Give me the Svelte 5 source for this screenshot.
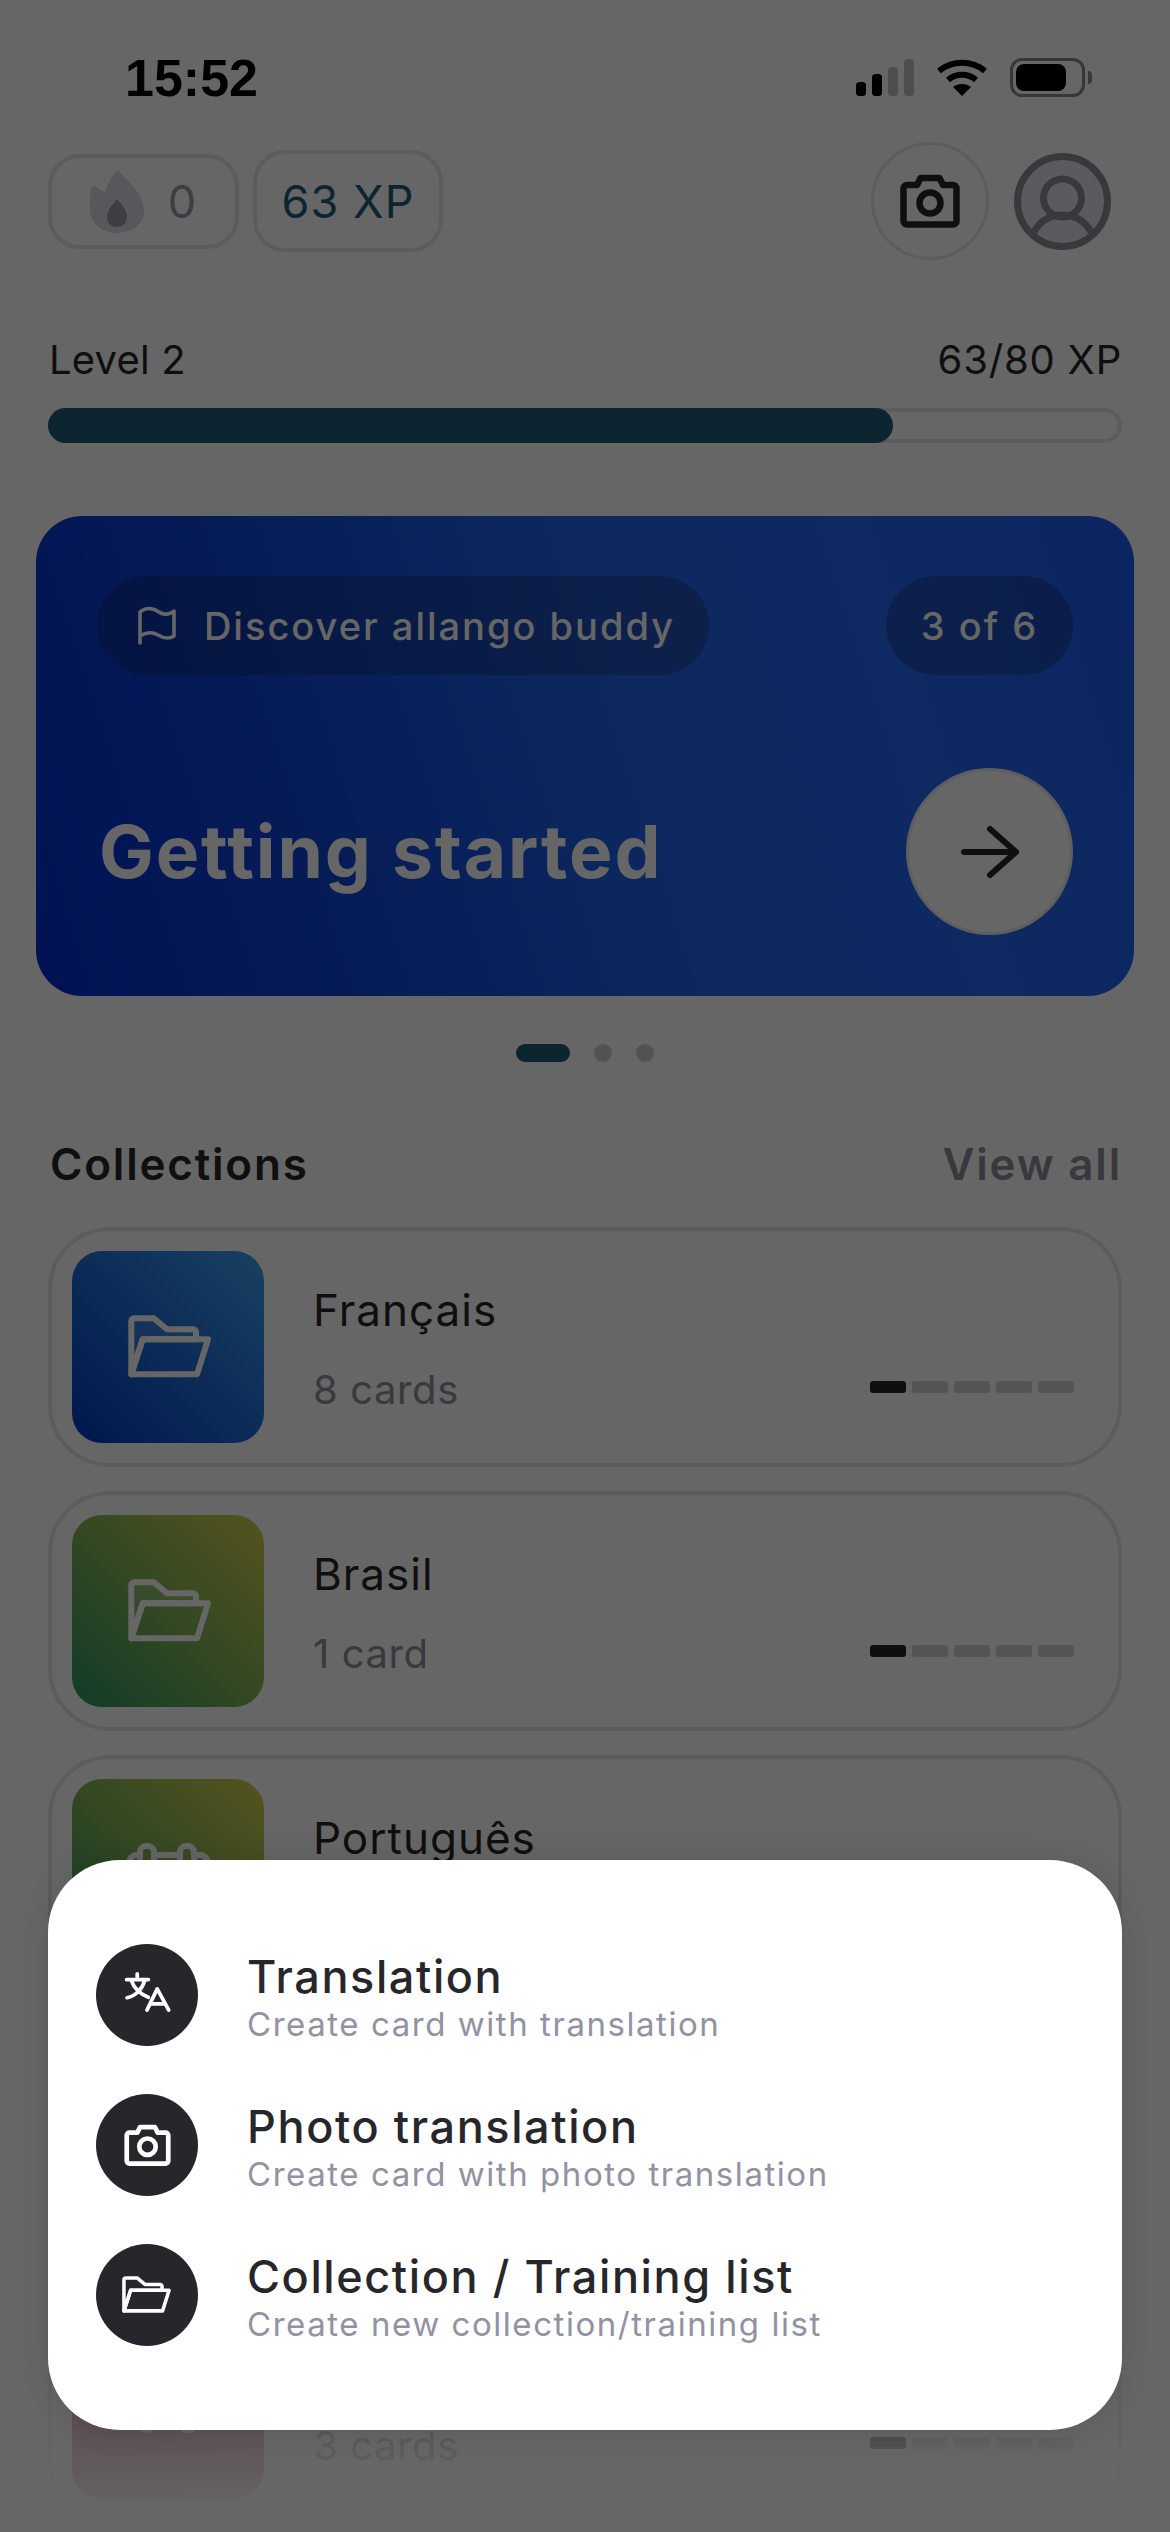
<script>
  const cards = [
    { name: 'Français', sub: '8 cards', tone: 'blue', icon: 'folder' },
    { name: 'Brasil', sub: '1 card', tone: 'green', icon: 'folder' },
    { name: 'Português', sub: '', tone: 'green', icon: 'calendar' },
    { name: '', sub: '', tone: 'green', icon: 'folder' },
    { name: '', sub: '3 cards', tone: 'red', icon: 'cart' }
  ];
  const actions = [
    { title: 'Translation', sub: 'Create card with translation', icon: 'translate' },
    { title: 'Photo translation', sub: 'Create card with photo translation', icon: 'camera' },
    { title: 'Collection / Training list', sub: 'Create new collection/training list', icon: 'folder' }
  ];
</script>

{#snippet folder(w, tab)}
  <svg class="folder" width={w} height={w * 64 / 85} viewBox="0 0 85 64" fill="none" stroke="currentColor" stroke-width="6" stroke-linejoin="round" stroke-linecap="round">
    <path d="M3.3 59.3V6a2.7 2.7 0 0 1 2.7-2.7H25.7L39 14.3H65a3 3 0 0 1 3 3V24.3H14.7L3.3 59.3Z" fill={tab}/>
    <path d="M14.7 24.3H80L69 59.3H3.3Z"/>
  </svg>
{/snippet}

{#snippet camera(w, sw)}
  <svg width={w} height={w * 0.9} viewBox="0 0 60 54" fill="none" stroke="currentColor" stroke-width={sw} stroke-linejoin="round">
    <path d="M7 11H17L20.500 4H39.500L43 11H53a3.500 3.500 0 0 1 3.500 3.500V47a3.500 3.500 0 0 1-3.500 3.500H7A3.500 3.500 0 0 1 3.500 47V14.500A3.500 3.500 0 0 1 7 11Z"/>
    <circle cx="30" cy="29" r="10.500"/>
  </svg>
{/snippet}

<div class="page">
  <div class="status">
    <span class="time">15:52</span>
    <div class="sys">
      <svg width="58" height="37" viewBox="0 0 58 37">
        <rect x="0" y="23" width="10" height="14" rx="3.500" fill="#000"/>
        <rect x="16" y="15" width="10" height="22" rx="3.500" fill="#000"/>
        <rect x="32" y="8" width="10" height="29" rx="3.500" fill="#c4c4c4"/>
        <rect x="48" y="0" width="10" height="37" rx="3.500" fill="#c4c4c4"/>
      </svg>
      <svg width="50" height="37" viewBox="0 0 50 37" fill="none" stroke="#000" stroke-width="6">
        <path d="M2 12C15 1 35 1 48 12"/>
        <path d="M11 21C19 14 31 14 39 21"/>
        <path d="M25 37L16 28C21 24 29 24 34 28Z" fill="#000" stroke="none"/>
      </svg>
      <div class="battery"><span class="cell"></span><span class="nub"></span></div>
    </div>
  </div>

  <div class="top">
    <div class="chip streak">
      <svg width="54" height="63" viewBox="0 0 54 63">
        <path d="M28 1C38 10 54 24 54 41C54 54 42 63 27 63C12 63 0 53 0 40C0 30 0 20 2 17C4 15 12 20 15 23C17 14 22 5 28 1Z" fill="#dcdce6"/>
        <path d="M27 29C31 34 37 40 37 47C37 53 33 57 27 57C21 57 17 53 17 47C17 40 23 34 27 29Z" fill="#9c9ca6"/>
      </svg>
      <span>0</span>
    </div>
    <div class="chip xp">63 XP</div>
    <div class="spacer"></div>
    <div class="cam">{@render camera(60, 6.500)}</div>
    <svg class="avatar" width="97" height="97" viewBox="0 0 97 97" fill="#e4e4ee" stroke="#8e8e99" stroke-width="7">
      <circle cx="48.500" cy="48.500" r="45"/>
      <circle cx="48.500" cy="45" r="19" fill="none"/>
      <path d="M20 79C26 68 36 62 48.500 62S71 68 77 79" fill="none"/>
    </svg>
  </div>

  <div class="level">
    <span class="level-name">Level 2</span>
    <span>63/80 XP</span>
  </div>
  <div class="bar"><div class="fill"></div></div>

  <div class="banner">
    <div class="banner-top">
      <div class="pill quest">
        <svg width="40" height="40" viewBox="0 0 40 40" fill="none" stroke="currentColor" stroke-width="3.600" stroke-linecap="round" stroke-linejoin="round">
          <path d="M3 37V6C10 0 18 3 22 6S33 9 37 5V30C31 34 26 32 21 29S9 26 3 30"/>
        </svg>
        <span>Discover allango buddy</span>
      </div>
      <div class="pill count">3 of 6</div>
    </div>
    <div class="banner-bottom">
      <span class="headline">Getting started</span>
      <div class="go">
        <svg width="60" height="52" viewBox="0 0 60 52" fill="none" stroke="#262629" stroke-width="6" stroke-linecap="round" stroke-linejoin="round">
          <path d="M4 26H56M30 3L56 26L30 49"/>
        </svg>
      </div>
    </div>
  </div>

  <div class="dots"><span class="dot on"></span><span class="dot"></span><span class="dot"></span></div>

  <div class="head">
    <span class="head-title">Collections</span>
    <span class="head-link">View all</span>
  </div>

  <div class="list">
    {#each cards as c}
      <div class="card">
        <div class="thumb {c.tone}">
          {#if c.icon === 'folder'}
            {@render folder(85, 'rgba(255,255,255,.12)')}
          {:else if c.icon === 'calendar'}
            <svg width="85" height="64" viewBox="0 0 85 64" fill="none" stroke="currentColor" stroke-width="6" stroke-linejoin="round">
              <path d="M14 12H11A8 8 0 0 0 3 20V53A8 8 0 0 0 11 61H74A8 8 0 0 0 82 53V20A8 8 0 0 0 74 12H68M28 12H54"/>
              <path d="M14 24V9A6 6 0 0 1 20 3H22A6 6 0 0 1 28 9V24M54 24V9A6 6 0 0 1 60 3H62A6 6 0 0 1 68 9V24"/>
            </svg>
          {:else}
            <svg width="85" height="60" viewBox="0 0 85 60" fill="none" stroke="currentColor" stroke-width="6" stroke-linejoin="round" stroke-linecap="round">
              <path d="M3 4H14L24 38H66L76 12H18"/>
              <circle cx="21" cy="52" r="5" fill="currentColor"/>
              <circle cx="62" cy="52" r="6" fill="currentColor"/>
            </svg>
          {/if}
        </div>
        <div class="info">
          <div class="name">{c.name}</div>
          <div class="meta">
            <span class="sub">{c.sub}</span>
            <div class="steps">
              <span class="step on"></span><span class="step"></span><span class="step"></span><span class="step"></span><span class="step"></span>
            </div>
          </div>
        </div>
      </div>
    {/each}
  </div>

  <div class="fade"></div>
  <div class="overlay"></div>

  <div class="sheet">
    {#each actions as a}
      <div class="action">
        <div class="action-icon">
          {#if a.icon === 'translate'}
            <svg width="115" height="115" viewBox="0 0 115 115" fill="none" stroke="#fff" stroke-width="4.200" stroke-linecap="round" stroke-linejoin="round">
              <path d="M34.500 39.500H59M46.500 33V39M39.500 40C43 50 50 56 59 59.500M55 40C52.500 50 45 58 35 60M57.500 74L69 50L82 74M62 67H77"/>
            </svg>
          {:else if a.icon === 'camera'}
            {@render camera(47, 6)}
          {:else}
            {@render folder(50, 'none')}
          {/if}
        </div>
        <div class="action-text">
          <div class="action-title">{a.title}</div>
          <div class="action-sub">{a.sub}</div>
        </div>
      </div>
    {/each}
  </div>
</div>

<style>
  :global(body) { margin: 0; background: #fff; }
  .page {
    position: relative;
    width: 1170px;
    height: 2532px;
    overflow: hidden;
    background: #fff;
    font-family: Inter, "Liberation Sans", sans-serif;
    color: #262629;
  }
  .status {
    box-sizing: border-box;
    height: 142px;
    padding: 58px 85px 0 125px;
    display: flex;
    justify-content: space-between;
    align-items: flex-start;
  }
  .time {
    font-family: "Liberation Sans", Arial, sans-serif;
    font-size: 52px;
    font-weight: 700;
    line-height: 40px;
    color: #000;
  }
  .sys { display: flex; align-items: center; gap: 23px; }
  .battery {
    position: relative;
    box-sizing: border-box;
    width: 75px;
    height: 39px;
    border: 3px solid #8a8a8a;
    border-radius: 12px;
    padding: 3px;
    display: flex;
  }
  .cell { width: 50px; background: #000; border-radius: 8px; }
  .nub { position: absolute; right: -10px; top: 10px; width: 4px; height: 13px; background: #8a8a8a; border-radius: 0 4px 4px 0; }

  .top { height: 118px; margin: 0 59px 0 48px; display: flex; align-items: center; }
  .spacer { flex: 1; }
  .chip {
    box-sizing: border-box;
    display: flex;
    align-items: center;
    justify-content: center;
    border: 4px solid #e6e6e6;
    border-radius: 32px;
    font-size: 45px;
    letter-spacing: 1px;
  }
  .streak { width: 191px; height: 95px; gap: 24px; margin-right: 14px; color: #9c9ca6; }
  .xp { width: 190px; height: 102px; color: #205d78; }
  .cam {
    box-sizing: border-box;
    width: 118px;
    height: 118px;
    border: 3px solid #e6e6e6;
    border-radius: 50%;
    display: flex;
    align-items: center;
    justify-content: center;
    color: #262629;
    margin-right: 25px;
  }
  .avatar { display: block; }

  .level {
    margin: 75px 48px 0 49px;
    display: flex;
    justify-content: space-between;
    font-size: 40px;
    line-height: 50px;
    letter-spacing: 0.8px;
  }
  .level-name { letter-spacing: 0.2px; }
  .bar {
    box-sizing: border-box;
    height: 35px;
    margin: 23px 48px 0;
    border: 4px solid #e6e6e6;
    border-radius: 18px;
    position: relative;
  }
  .fill {
    position: absolute;
    left: -4px; top: -4px; bottom: -4px;
    width: 845px;
    background: #205d78;
    border-radius: 18px;
  }

  .banner {
    box-sizing: border-box;
    height: 480px;
    margin: 73px 36px 0;
    padding: 60px 61px 61px;
    border-radius: 46px;
    background: linear-gradient(72deg, #002dd2 0%, #0f45d8 25%, #2266ee 55%, #2669f5 78%, #1c5cf0 100%);
    color: #fff;
    display: flex;
    flex-direction: column;
    justify-content: space-between;
  }
  .banner-top, .banner-bottom { display: flex; justify-content: space-between; align-items: center; }
  .pill {
    box-sizing: border-box;
    height: 99px;
    border-radius: 50px;
    background: rgba(20, 30, 60, 0.3);
    display: flex;
    align-items: center;
    justify-content: center;
    font-size: 38px;
    font-weight: 500;
    letter-spacing: 2px;
  }
  .quest { width: 612px; gap: 27px; padding-left: 6px; }
  .count { width: 187px; }
  .headline { font-size: 73px; font-weight: 700; letter-spacing: 1.900px; margin-left: 2px; }
  .go {
    box-sizing: border-box;
    width: 167px;
    height: 167px;
    border-radius: 50%;
    background: #fff;
    border: 3px solid rgba(0, 0, 0, 0.08);
    display: flex;
    align-items: center;
    justify-content: center;
  }

  .dots { margin-top: 48px; height: 18px; display: flex; justify-content: center; gap: 24px; }
  .dot { width: 18px; height: 18px; border-radius: 50%; background: #ccc; }
  .dot.on { width: 54px; border-radius: 9px; background: #205d78; }

  .head {
    margin: 77px 48px 0 50px;
    display: flex;
    justify-content: space-between;
    font-size: 44px;
    font-weight: 600;
    line-height: 50px;
    letter-spacing: 1.800px;
  }
  .head-link { color: #8e8e99; }

  .list { margin: 38px 48px 0; display: flex; flex-direction: column; gap: 24px; }
  .card {
    box-sizing: border-box;
    height: 240px;
    border: 4px solid #e6e6e6;
    border-radius: 62px;
    padding: 20px 44px 20px 20px;
    display: flex;
    gap: 49px;
  }
  .thumb {
    width: 192px;
    height: 192px;
    flex: none;
    border-radius: 30px;
    display: flex;
    align-items: center;
    justify-content: center;
    color: #fff;
  }
  .thumb .folder { margin-left: 5px; }
  .blue { background: linear-gradient(45deg, #003ac0, #3ea2f5); }
  .green { background: linear-gradient(45deg, #2e9664, #d4d24b); }
  .red { background: linear-gradient(45deg, #b85068, #c86878); }
  .info { flex: 1; padding-top: 34px; }
  .name { font-size: 44px; line-height: 50px; letter-spacing: 1px; height: 50px; }
  .meta { margin-top: 30px; display: flex; justify-content: space-between; align-items: center; height: 50px; }
  .sub { font-size: 40px; line-height: 50px; color: #8e8e9b; letter-spacing: 0.6px; }
  .steps { display: flex; gap: 6px; margin-top: -6px; }
  .step { width: 36px; height: 12px; border-radius: 3px; background: #d2d2d2; }
  .step.on { background: #262629; }

  .fade {
    position: absolute;
    left: 0; right: 0; bottom: 0;
    height: 300px;
    background: linear-gradient(to bottom, rgba(255,255,255,0), #fff 95%);
  }
  .overlay { position: absolute; inset: 0; background: rgba(0, 0, 0, 0.6); }

  .sheet {
    position: absolute;
    left: 48px;
    top: 1860px;
    box-sizing: border-box;
    width: 1074px;
    height: 570px;
    padding: 84px 48px 0;
    background: #fff;
    border-radius: 72px;
    box-shadow: 0 0 30px rgba(0, 0, 0, 0.12);
    display: flex;
    flex-direction: column;
    gap: 48px;
  }
  .action { display: flex; align-items: center; gap: 49px; height: 102px; }
  .action-icon {
    width: 102px;
    height: 102px;
    border-radius: 50%;
    background: #27272b;
    color: #fff;
    display: flex;
    align-items: center;
    justify-content: center;
    flex: none;
    overflow: hidden;
  }
  .action-text { padding-top: 8px; }
  .action-title { font-size: 45px; line-height: 46px; font-weight: 500; letter-spacing: 1.600px; color: #27272b; }
  .action-sub { font-size: 33px; line-height: 42px; color: #9292a3; letter-spacing: 1.550px; margin-top: 3px; }
</style>
